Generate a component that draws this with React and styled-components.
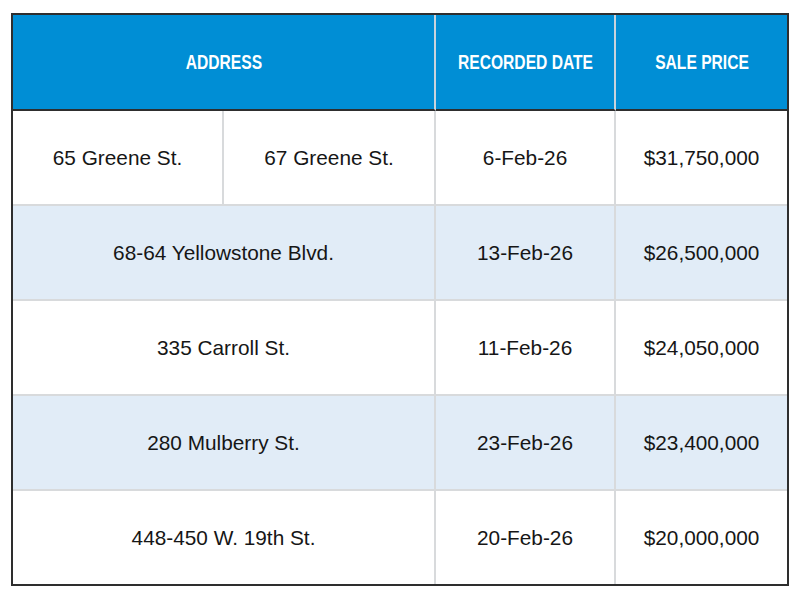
import React from "react";
import styled, { createGlobalStyle } from "styled-components";

const GlobalStyle = createGlobalStyle`
  body {
    margin: 0;
    background: #ffffff;
    font-family: "Liberation Sans", Arial, sans-serif;
  }
`;

const Page = styled.div`
  width: 800px;
  height: 600px;
  padding: 13px 0 0 11px;
  box-sizing: border-box;
`;

const Table = styled.table`
  width: 778px;
  box-sizing: border-box;
  border-collapse: separate;
  border-spacing: 0;
  border: 2px solid #2e2e2e;
  table-layout: fixed;
`;

const HeadCell = styled.th`
  height: 94px;
  padding: 0;
  background: #008ed5;
  color: #ffffff;
  font-weight: bold;
  font-size: 20px;
  text-align: center;
  vertical-align: middle;
  border-right: 2px solid #c9d3dc;
  border-bottom: 2px solid #2e2e2e;
  &:last-child {
    border-right: none;
  }
`;

const Condensed = styled.span`
  display: inline-block;
  white-space: nowrap;
  transform: scaleX(0.78);
`;

const Row = styled.tr`
  background: ${({ $shaded }) => ($shaded ? "#e1ecf7" : "#ffffff")};
  &:last-child td {
    border-bottom: none;
  }
`;

const Cell = styled.td`
  height: 93px;
  padding: 0;
  color: #161616;
  font-size: 20.8px;
  text-align: center;
  vertical-align: middle;
  border-right: 2px solid #d8dadc;
  border-bottom: 2px solid #d8dadc;
  &:last-child {
    border-right: none;
  }
`;

const rows = [
  { date: "13-Feb-26", price: "$26,500,000", address: "68-64 Yellowstone Blvd." },
  { date: "11-Feb-26", price: "$24,050,000", address: "335 Carroll St." },
  { date: "23-Feb-26", price: "$23,400,000", address: "280 Mulberry St." },
  { date: "20-Feb-26", price: "$20,000,000", address: "448-450 W. 19th St." },
];

export default function App() {
  return (
    <Page>
      <GlobalStyle />
      <Table>
        <colgroup>
          <col style={{ width: 211 }} />
          <col style={{ width: 212 }} />
          <col style={{ width: 180 }} />
          <col style={{ width: 171 }} />
        </colgroup>
        <thead>
          <tr>
            <HeadCell colSpan={2}><Condensed>ADDRESS</Condensed></HeadCell>
            <HeadCell><Condensed>RECORDED DATE</Condensed></HeadCell>
            <HeadCell><Condensed>SALE PRICE</Condensed></HeadCell>
          </tr>
        </thead>
        <tbody>
          <Row>
            <Cell>65 Greene St.</Cell>
            <Cell>67 Greene St.</Cell>
            <Cell>6-Feb-26</Cell>
            <Cell>$31,750,000</Cell>
          </Row>
          {rows.map((r, i) => (
            <Row key={r.address} $shaded={i % 2 === 0}>
              <Cell colSpan={2}>{r.address}</Cell>
              <Cell>{r.date}</Cell>
              <Cell>{r.price}</Cell>
            </Row>
          ))}
        </tbody>
      </Table>
    </Page>
  );
}
